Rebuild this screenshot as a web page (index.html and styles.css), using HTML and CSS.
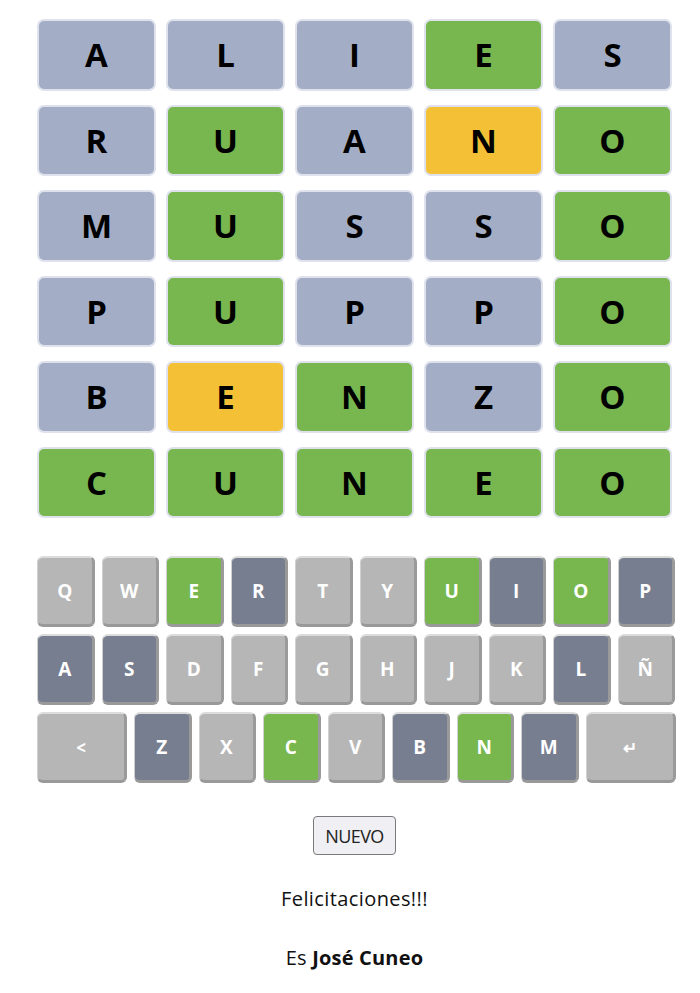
FILE: index.html
```html
<!DOCTYPE html>
<html lang="es">
<head>
<meta charset="utf-8">
<title>Palabra</title>
<link rel="stylesheet" href="styles.css">
</head>
<body>
<main class="app">
  <section class="board">
    <div class="tile g">A</div><div class="tile g">L</div><div class="tile g">I</div><div class="tile ok">E</div><div class="tile g">S</div>
    <div class="tile g">R</div><div class="tile ok">U</div><div class="tile g">A</div><div class="tile y">N</div><div class="tile ok">O</div>
    <div class="tile g">M</div><div class="tile ok">U</div><div class="tile g">S</div><div class="tile g">S</div><div class="tile ok">O</div>
    <div class="tile g">P</div><div class="tile ok">U</div><div class="tile g">P</div><div class="tile g">P</div><div class="tile ok">O</div>
    <div class="tile g">B</div><div class="tile y">E</div><div class="tile ok">N</div><div class="tile g">Z</div><div class="tile ok">O</div>
    <div class="tile ok">C</div><div class="tile ok">U</div><div class="tile ok">N</div><div class="tile ok">E</div><div class="tile ok">O</div>
  </section>

  <section class="keyboard">
    <div class="krow">
      <div class="key">Q</div><div class="key">W</div><div class="key ok">E</div><div class="key no">R</div><div class="key">T</div><div class="key">Y</div><div class="key ok">U</div><div class="key no">I</div><div class="key ok">O</div><div class="key no">P</div>
    </div>
    <div class="krow">
      <div class="key no">A</div><div class="key no">S</div><div class="key">D</div><div class="key">F</div><div class="key">G</div><div class="key">H</div><div class="key">J</div><div class="key">K</div><div class="key no">L</div><div class="key">Ñ</div>
    </div>
    <div class="krow">
      <div class="key wide">&lt;</div><div class="key no">Z</div><div class="key">X</div><div class="key ok">C</div><div class="key">V</div><div class="key no">B</div><div class="key ok">N</div><div class="key no">M</div><div class="key wide">&#8629;</div>
    </div>
  </section>

  <div class="actions"><button class="btn">NUEVO</button></div>
  <p class="msg">Felicitaciones!!!</p>
  <p class="msg answer">Es <b>José Cuneo</b></p>
</main>
</body>
</html>
```

FILE: styles.css
```css
html, body {
  margin: 0;
  padding: 0;
  background: #ffffff;
}
body {
  font-family: "Open Sans", "Noto Sans", sans-serif;
  color: #111;
}
.app {
  width: 635px;
  margin-left: 37px;
  padding-top: 19px;
}
.board {
  display: grid;
  grid-template-columns: repeat(5, 119px);
  grid-auto-rows: 71.5px;
  column-gap: 10px;
  row-gap: 14px;
}
.tile {
  box-sizing: border-box;
  border: 2px solid #dfe2ec;
  border-radius: 7px;
  display: flex;
  align-items: center;
  justify-content: center;
  font-weight: 700;
  font-size: 33px;
  color: #000;
}
.tile.g { background: #a3aec6; }
.tile.ok { background: #78b650; }
.tile.y { background: #f4c035; }

.keyboard {
  margin-top: 38px;
  display: flex;
  flex-direction: column;
  gap: 7px;
}
.krow {
  display: flex;
  gap: 7px;
  height: 71px;
}
.key {
  box-sizing: border-box;
  width: 57.5px;
  flex: none;
  border-radius: 6px;
  background: #b6b6b6;
  border-top: 2px solid #dcdcdc;
  border-left: 1px solid #d0d0d0;
  border-right: 3px solid #9a9a9a;
  border-bottom: 3px solid #999999;
  display: flex;
  align-items: center;
  justify-content: center;
  color: #ffffff;
  font-weight: 700;
  font-size: 19px;
}
.key.no { background: #767e90; }
.key.ok { background: #77b74d; }
.key.wide { width: 90px; font-size: 17px; }

.actions {
  display: flex;
  justify-content: center;
  margin-top: 33px;
}
.btn {
  font-family: "Open Sans", "Noto Sans", sans-serif;
  font-size: 18px;
  color: #222;
  background: #efeff4;
  border: 1px solid #7a7a7a;
  border-radius: 4px;
  height: 39px;
  padding: 0 11px;
  letter-spacing: -0.6px;
}
.msg {
  text-align: center;
  font-size: 20px;
  margin: 30px 0 0;
  line-height: 28px;
  letter-spacing: 0.4px;
  color: #111;
}
.msg.answer {
  margin-top: 31px;
  letter-spacing: 0.2px;
}
```
